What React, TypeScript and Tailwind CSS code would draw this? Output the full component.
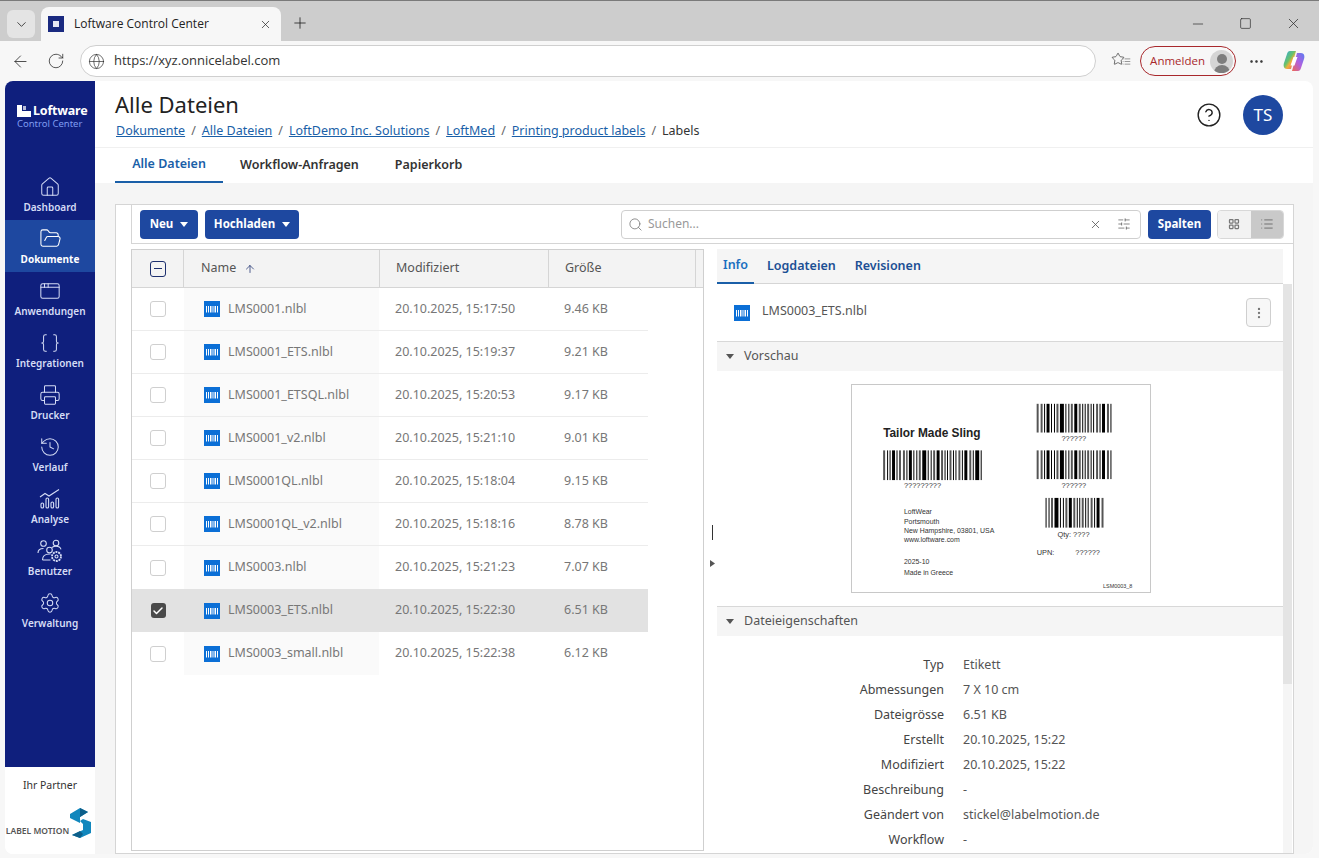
import React from 'react';
import {
  ArrowLeft, ChevronDown, Check, Globe, House, FolderOpen, AppWindow, Braces, Printer, History,
  Settings, MoreHorizontal, MoreVertical, Plus, RotateCw, Search, SlidersHorizontal, Square, Minus, X, ArrowUp,
  LayoutGrid, List, CircleHelp, Star,
} from 'lucide-react';

const files = [
  { name: 'LMS0001.nlbl', date: '20.10.2025, 15:17:50', size: '9.46 KB' },
  { name: 'LMS0001_ETS.nlbl', date: '20.10.2025, 15:19:37', size: '9.21 KB' },
  { name: 'LMS0001_ETSQL.nlbl', date: '20.10.2025, 15:20:53', size: '9.17 KB' },
  { name: 'LMS0001_v2.nlbl', date: '20.10.2025, 15:21:10', size: '9.01 KB' },
  { name: 'LMS0001QL.nlbl', date: '20.10.2025, 15:18:04', size: '9.15 KB' },
  { name: 'LMS0001QL_v2.nlbl', date: '20.10.2025, 15:18:16', size: '8.78 KB' },
  { name: 'LMS0003.nlbl', date: '20.10.2025, 15:21:23', size: '7.07 KB' },
  { name: 'LMS0003_ETS.nlbl', date: '20.10.2025, 15:22:30', size: '6.51 KB', selected: true },
  { name: 'LMS0003_small.nlbl', date: '20.10.2025, 15:22:38', size: '6.12 KB' },
];

const props = [
  ['Typ', 'Etikett'],
  ['Abmessungen', '7 X 10 cm'],
  ['Dateigrösse', '6.51 KB'],
  ['Erstellt', '20.10.2025, 15:22'],
  ['Modifiziert', '20.10.2025, 15:22'],
  ['Beschreibung', '-'],
  ['Geändert von', 'stickel@labelmotion.de'],
  ['Workflow', '-'],
];

const AnalyseIcon = () => (
  <svg width="22" height="22" viewBox="0 0 22 22" fill="none" stroke="currentColor" strokeWidth="1.1">
    <path d="M1 9l5-3.5 4 2.5L20 1.5" />
    <rect x="2" y="15" width="2.6" height="5" rx="1.3" />
    <rect x="7" y="10" width="2.6" height="10" rx="1.3" />
    <rect x="12" y="14" width="2.6" height="6" rx="1.3" />
    <rect x="17" y="10" width="2.6" height="10" rx="1.3" />
  </svg>
);

const UsersGearIcon = () => (
  <svg width="26" height="24" viewBox="0 0 26 24" fill="none" stroke="currentColor" strokeWidth="1.1">
    <circle cx="6.5" cy="4.5" r="2.8" />
    <circle cx="19" cy="4" r="2.8" />
    <circle cx="12.5" cy="11" r="2.8" />
    <path d="M1 14c0-3 2.5-4.5 5.500-4.500" />
    <path d="M15 8.500c1-.8 2.500-1.200 4-1.200 2.500 0 4.500 1.200 5 3" />
    <path d="M5.500 21c0-3.500 2.500-6 7-6h1M5.500 21h8" />
    <circle cx="19.500" cy="17.500" r="4.500" strokeDasharray="2 .8" strokeWidth="1.800" />
    <circle cx="19.500" cy="17.500" r="1.500" />
  </svg>
);

const navItems: { label: string; icon: React.ReactNode; active?: boolean }[] = [
  { label: 'Dashboard', icon: <House size={22} strokeWidth={1.1} /> },
  { label: 'Dokumente', icon: <FolderOpen size={23} strokeWidth={1.1} />, active: true },
  { label: 'Anwendungen', icon: <AppWindow size={22} strokeWidth={1.1} /> },
  { label: 'Integrationen', icon: <Braces size={22} strokeWidth={1.1} /> },
  { label: 'Drucker', icon: <Printer size={22} strokeWidth={1.1} /> },
  { label: 'Verlauf', icon: <History size={22} strokeWidth={1.1} /> },
  { label: 'Analyse', icon: <AnalyseIcon /> },
  { label: 'Benutzer', icon: <UsersGearIcon /> },
  { label: 'Verwaltung', icon: <Settings size={22} strokeWidth={1.1} /> },
];

const LabelFileIcon = ({ small }: { small?: boolean }) => (
  <svg width={small ? 16 : 16} height={small ? 16 : 16} viewBox="0 0 16 16" className="shrink-0">
    <rect width="16" height="16" fill="#0b6fd6" />
    <path d="M2.500 5v6.500M4.500 5v6.500M6.500 5v6.500M8 5v6.500M10 5v6.500M11.500 5v6.500M13.500 5v6.500" stroke="#fff" strokeWidth="1" />
  </svg>
);

const Caret = ({ color = '#fff' }: { color?: string }) => (
  <svg width="8" height="5" viewBox="0 0 8 5"><path d="M0 0h8L4 5z" fill={color} /></svg>
);

// barcode drawn from a repeating width pattern
const bars1 = [2, 1, 1, 3, 1, 2, 2, 1, 3, 1, 1, 2, 4, 1, 1, 2, 3, 2, 1, 1, 2, 1, 1, 2, 1, 3, 2, 1, 4, 1, 1, 2, 1, 1, 1, 2, 3, 1, 1, 1, 2, 1, 1, 2, 1, 3];

const Barcode = ({ x, y, w, h, seed = 0 }: { x: number; y: number; w: number; h: number; seed?: number }) => {
  const rects: React.ReactNode[] = [];
  let cx = 0;
  let i = seed;
  while (cx < w) {
    const bw = bars1[i % bars1.length];
    const gap = bars1[(i + 3) % bars1.length] > 2 ? 2 : 1.500;
    rects.push(<rect key={i} x={x + cx} y={y} width={Math.min(bw, w - cx)} height={h} fill={bw === 2 ? '#555' : '#000'} />);
    cx += bw + gap;
    i++;
  }
  return <g>{rects}</g>;
};

const LabelPreview = () => (
  <svg width="300" height="209" viewBox="0 0 300 209" className="border border-[#c8c8c8] bg-white" fontFamily="'Liberation Sans', sans-serif" fill="#333">
    <text x="31" y="52" fontSize="12" fontWeight="700" fill="#222">Tailor Made Sling</text>
    <Barcode x={31} y={66} w={101} h={30} />
    <text x="52" y="104" fontSize="7.500">?????????</text>
    <Barcode x={186} y={19} w={77} h={29} seed={5} />
    <text x="211" y="57" fontSize="7.500">??????</text>
    <Barcode x={186} y={66} w={77} h={29} seed={5} />
    <text x="211" y="104" fontSize="7.500">??????</text>
    <Barcode x={195} y={114} w={60} h={30} seed={9} />
    <text x="207" y="153" fontSize="7.500">Qty: ????</text>
    <text x="186" y="172" fontSize="7.500">UPN:</text>
    <text x="225" y="172" fontSize="7.500">??????</text>
    <text x="52" y="130" fontSize="7">LoftWear</text>
    <text x="52" y="140" fontSize="7">Portsmouth</text>
    <text x="52" y="149" fontSize="7">New Hampshire, 03801, USA</text>
    <text x="52" y="159" fontSize="7">www.loftware.com</text>
    <text x="52" y="181" fontSize="7">2025-10</text>
    <text x="52" y="192" fontSize="7">Made in Greece</text>
    <text x="253" y="205" fontSize="5.500">LSM0003_8</text>
  </svg>
);

const Section = ({ title, className = '' }: { title: string; className?: string }) => (
  <div className={`flex items-center h-[30px] bg-[#f5f5f5] border-t border-[#d8d8d8] pl-[9px] text-[12.500px] text-[#555] gap-[10px] ${className}`}>
    <Caret color="#555" />
    <span>{title}</span>
  </div>
);

const App: React.FC = () => {
  return (
    <div className="w-[1319px] h-[858px] overflow-hidden bg-[#f7f7f7] flex flex-col font-['Noto_Sans','Open_Sans',sans-serif] text-[#333] border-t border-[#7a7a7a]">
      {/* browser tab strip */}
      <div className="h-[40px] shrink-0 bg-[#cdcdcd] flex items-end pl-[7px] relative">
        <div className="w-[28px] h-[28px] mb-[3px] rounded-md bg-[#e4e4e4] flex items-center justify-center">
          <ChevronDown size={15} strokeWidth={1.300} className="text-[#222]" />
        </div>
        <div className="ml-[6px] w-[240px] h-[34px] bg-[#f7f7f7] rounded-t-lg flex items-center pl-[7px] pr-[9px] font-['Open_Sans',sans-serif]">
          <div className="w-[16px] h-[16px] bg-[#1a2a80] flex items-center justify-center mr-[10px]">
            <div className="w-[6px] h-[6px] bg-[#e8e8f5]" />
          </div>
          <span className="text-[12px] text-[#222] flex-1">Loftware Control Center</span>
          <X size={13} strokeWidth={1.300} className="text-[#222]" />
        </div>
        <Plus size={18} strokeWidth={1} className="ml-[10px] mb-[9px] text-[#111]" />
        <div className="ml-auto flex items-center gap-[33px] mb-[9px] mr-[17px] text-[#222]">
          <Minus size={16} strokeWidth={1} />
          <Square size={13} strokeWidth={1.200} />
          <X size={17} strokeWidth={1} />
        </div>
      </div>
      {/* browser toolbar */}
      <div className="h-[40px] shrink-0 flex items-center pl-[11px] pr-[13px]">
        <ArrowLeft size={19} strokeWidth={1} className="text-[#222]" />
        <RotateCw size={18} strokeWidth={1} className="ml-[17px] text-[#222]" />
        <div className="ml-[15px] w-[1017px] h-[32px] rounded-full border border-[#cfcfcf] bg-white flex items-center pl-[7px] font-['Open_Sans',sans-serif]">
          <Globe size={17} strokeWidth={1} className="text-[#333]" />
          <span className="ml-[9px] text-[13px] text-[#333]">https://xyz.onnicelabel.com</span>
        </div>
        <div className="ml-[15px] relative w-[18px] h-[18px]">
          <Star size={14} strokeWidth={1.100} className="text-[#222]" />
          <List size={9} strokeWidth={1.200} className="absolute right-[-2px] top-[5px] text-[#222]" />
        </div>
        <div className="ml-[11px] w-[96px] h-[30px] rounded-full border border-[#a8282c] flex items-center pl-[9px] pr-[2px] justify-between font-['Open_Sans',sans-serif]">
          <span className="text-[11.500px] text-[#a8282c]">Anmelden</span>
          <div className="w-[23px] h-[23px] rounded-full bg-[#d5d5d5] flex flex-col items-center justify-end overflow-hidden">
            <div className="w-[10px] h-[10px] rounded-full bg-[#7d7d7d] mb-[1px]" />
            <div className="w-[16px] h-[8px] rounded-t-full bg-[#7d7d7d]" />
          </div>
        </div>
        <MoreHorizontal size={17} strokeWidth={1.500} className="ml-[12px] text-[#222]" />
        <svg width="24" height="24" viewBox="0 0 24 24" className="ml-[17px]">
          <defs>
            <linearGradient id="cp" x1="0" y1="0" x2="1" y2="1">
              <stop offset="0" stopColor="#2aa9e8" /><stop offset=".45" stopColor="#6ac26a" /><stop offset=".6" stopColor="#f2b03a" /><stop offset="1" stopColor="#e0508a" />
            </linearGradient>
            <linearGradient id="cp2" x1="1" y1="0" x2="0" y2="1">
              <stop offset="0" stopColor="#5a7cf0" /><stop offset=".5" stopColor="#b060e0" /><stop offset="1" stopColor="#f06a50" />
            </linearGradient>
          </defs>
          <path d="M8 2h6l-5 18H5C2 20 1 17 2 14L5 5c.5-2 1.500-3 3-3z" fill="url(#cp)" />
          <path d="M16 22h-6l5-18h4c3 0 4 3 3 6l-3 9c-.5 2-1.500 3-3 3z" fill="url(#cp2)" />
          <path d="M11.500 8h4l-3 8.500h-4z" fill="#fff" />
        </svg>
      </div>

      {/* page */}
      <div className="flex-1 min-h-0 flex ml-[5px] mr-[6px] mb-[4px] rounded-[8px] overflow-hidden bg-white">
        {/* sidebar */}
        <div className="w-[90px] shrink-0 flex flex-col">
          <div className="h-[686px] bg-[#0f1f7d] flex flex-col">
            <div className="h-[87px] pt-[22px] pl-[12px]">
              <div className="flex items-center gap-[2px] text-white font-bold text-[12.500px] leading-[15px] tracking-[-0.2px]">
                <svg width="14" height="12" viewBox="0 0 14 12"><path d="M0 0h5v6h9v6H0z" fill="#fff" /><rect x="6" y="1" width="3" height="4" fill="#fff" opacity=".7" /></svg>
                <span>Loftware</span>
              </div>
              <div className="text-[#7f9cf0] text-[9.500px] leading-[12px]">Control Center</div>
            </div>
            {navItems.map(item => (
              <div
                key={item.label}
                className={`h-[52px] flex flex-col items-center justify-center text-[10px] leading-[14px] ${item.active ? 'bg-[#1e48a0] text-white font-bold' : 'text-[#d5dcf5] font-semibold'}`}
              >
                <div className="h-[24px] flex items-center justify-center">{item.icon}</div>
                <span className="mt-[1px]">{item.label}</span>
              </div>
            ))}
          </div>
          <div className="flex-1 flex flex-col items-center bg-white">
            <span className="mt-[11px] text-[10.500px] text-[#333]">Ihr Partner</span>
            <div className="mt-[14px] flex items-end gap-[1px] ml-[-2px]">
              <span className="text-[8.500px] leading-[12px] text-[#555] font-semibold mb-[1px]">LABEL MOTION</span>
              <svg width="22" height="30" viewBox="0 0 22 30">
                <path d="M0 6L10 0l8 4-8 5v6l-10-5z" fill="#1187bd" />
                <path d="M10 0l8 4-8 5z" fill="#0d5f8a" />
                <path d="M21 14v11l-11 5-8-3 11-5v-6l-3-3 3-2z" fill="#1187bd" />
                <path d="M2 27l8-4 3 3-3 4z" fill="#0d5f8a" />
              </svg>
            </div>
          </div>
        </div>

        {/* main */}
        <div className="flex-1 min-w-0 flex flex-col">
          <div className="h-[67px] shrink-0 flex items-start pl-[20px] pr-[30px] border-b border-[#f0f0f0]">
            <div className="flex-1">
              <h1 className="mt-[9px] text-[22px] leading-[28px] text-[#222]">Alle Dateien</h1>
              <div className="mt-[3px] flex items-center text-[12.500px] leading-[20px] pl-[1px]">
                {['Dokumente', 'Alle Dateien', 'LoftDemo Inc. Solutions', 'LoftMed', 'Printing product labels'].map(b => (
                  <React.Fragment key={b}>
                    <span className="text-[#1a5fa8] underline">{b}</span>
                    <span className="mx-[6px] text-[#666]">/</span>
                  </React.Fragment>
                ))}
                <span className="text-[#333]">Labels</span>
              </div>
            </div>
            <CircleHelp size={26} strokeWidth={1.300} className="mt-[21px] text-[#222]" />
            <div className="ml-[21px] mt-[14px] w-[40px] h-[40px] rounded-full bg-[#1e48a0] text-white text-[17px] flex items-center justify-center">TS</div>
          </div>
          <div className="h-[35px] shrink-0 flex items-stretch pl-[20px] text-[12.500px] font-medium">
            <div className="w-[108px] flex items-center justify-center text-[#1a5fa8] border-b-2 border-[#1a5fa8] font-semibold">Alle Dateien</div>
            <div className="ml-[17px] flex items-center text-[#333] font-semibold">Workflow-Anfragen</div>
            <div className="ml-[36px] flex items-center text-[#333] font-semibold">Papierkorb</div>
          </div>

          <div className="flex-1 min-h-0 bg-[#f5f5f5] pt-[21px] pl-[20px] pr-[19px]">
            <div className="h-full bg-white border border-[#d5d5d5] pl-[15px] flex flex-col">
              {/* action bar */}
              <div className="h-[39px] shrink-0 flex items-center border-l border-b border-[#d5d5d5] pl-[8px] pr-[9px]">
                <button className="w-[58px] h-[29px] rounded-[4px] bg-[#1e48a0] text-white text-[11.500px] font-bold flex items-center justify-center gap-[7px]">
                  Neu <Caret />
                </button>
                <button className="ml-[7px] w-[94px] h-[29px] rounded-[4px] bg-[#1e48a0] text-white text-[11.500px] font-bold flex items-center justify-center gap-[7px]">
                  Hochladen <Caret />
                </button>
                <div className="ml-auto w-[520px] h-[29px] rounded-[4px] border border-[#cfcfcf] flex items-center pl-[6px] pr-[9px]">
                  <Search size={15} strokeWidth={1.300} className="text-[#777]" />
                  <span className="ml-[5px] text-[12px] text-[#999] flex-1">Suchen...</span>
                  <X size={13} strokeWidth={1.500} className="text-[#555]" />
                  <SlidersHorizontal size={14} strokeWidth={1.200} className="ml-[15px] text-[#555]" />
                </div>
                <button className="ml-[7px] w-[63px] h-[29px] rounded-[4px] bg-[#1e48a0] text-white text-[11.500px] font-bold">Spalten</button>
                <div className="ml-[6px] w-[67px] h-[29px] rounded-[4px] border border-[#d8d8d8] flex overflow-hidden">
                  <div className="flex-1 bg-[#f2f2f2] flex items-center justify-center"><LayoutGrid size={12} strokeWidth={2.500} className="text-[#777]" /></div>
                  <div className="flex-1 bg-[#c9c9c9] flex items-center justify-center"><List size={14} strokeWidth={1.500} className="text-[#666]" /></div>
                </div>
              </div>

              <div className="flex-1 min-h-0 flex pt-[5px]">
                {/* table */}
                <div className="w-[573px] h-[602px] shrink-0 border border-[#cfcfcf] flex flex-col">
                  <div className="h-[38px] shrink-0 flex bg-[#f3f3f3] border-b border-[#d5d5d5] text-[12.500px] text-[#555]">
                    <div className="w-[52px] flex items-center justify-center border-r border-[#d5d5d5]">
                      <div className="w-[16px] h-[16px] rounded-[3px] border border-[#1c2f6e] flex items-center justify-center">
                        <div className="w-[8px] h-[1.500px] bg-[#1c2f6e]" />
                      </div>
                    </div>
                    <div className="w-[196px] flex items-center pl-[17px] border-r border-[#d5d5d5]">
                      Name
                      <ArrowUp size={12} strokeWidth={1.500} className="ml-[8px] text-[#1c2f6e]" />
                    </div>
                    <div className="w-[169px] flex items-center pl-[16px] border-r border-[#d5d5d5]">Modifiziert</div>
                    <div className="w-[147px] flex items-center pl-[16px] border-r border-[#d5d5d5]">Größe</div>
                  </div>
                  <div className="w-[516px]">
                    {files.map((f, i) => (
                      <div key={f.name} className={`h-[43px] flex items-center text-[12.500px] text-[#777] ${f.selected ? 'bg-[#e2e2e2] text-[#555]' : i < files.length - 1 && !files[i + 1].selected ? 'border-b border-[#ececec]' : ''}`}>
                        <div className="w-[52px] flex items-center justify-center">
                          {f.selected ? (
                            <div className="w-[15px] h-[15px] rounded-[3px] bg-[#4a4a4a] flex items-center justify-center">
                              <Check size={12} strokeWidth={3} className="text-white" />
                            </div>
                          ) : (
                            <div className="w-[16px] h-[16px] rounded-[3px] border border-[#cfcfcf] bg-white" />
                          )}
                        </div>
                        <div className={`w-[195px] h-full flex items-center pl-[20px] gap-[8px] ${f.selected ? '' : 'bg-[#fafafa]'}`}>
                          <LabelFileIcon />
                          <span>{f.name}</span>
                        </div>
                        <div className="w-[170px] pl-[16px] shrink-0">{f.date}</div>
                        <div className="pl-[15px]">{f.size}</div>
                      </div>
                    ))}
                  </div>
                </div>

                {/* splitter */}
                <div className="w-[13px] shrink-0 flex flex-col items-center">
                  <div className="mt-[276px] w-[1px] h-[15px] bg-[#333] ml-[3px]" />
                  <svg width="5" height="7" viewBox="0 0 5 7" className="mt-[20px] ml-[3px]"><path d="M0 0l5 3.500L0 7z" fill="#555" /></svg>
                </div>

                {/* detail pane */}
                <div className="flex-1 min-w-0 flex overflow-hidden">
                  <div className="w-[566px] shrink-0 flex flex-col">
                    <div className="h-[35px] shrink-0 bg-[#f5f5f5] border-b border-[#d5d5d5] flex items-stretch text-[12.500px] font-semibold text-[#1c4f94]">
                      <div className="w-[37px] flex items-center justify-center text-[#1a6fc0] border-b-2 border-[#1a5fa8] -mb-[1px]">Info</div>
                      <div className="ml-[13px] flex items-center">Logdateien</div>
                      <div className="ml-[19px] flex items-center">Revisionen</div>
                    </div>
                    <div className="h-[57px] shrink-0 flex items-center pl-[17px] pr-[12px]">
                      <LabelFileIcon small />
                      <span className="ml-[12px] mb-[3px] text-[12.500px] text-[#555]">LMS0003_ETS.nlbl</span>
                      <div className="ml-auto w-[25px] h-[29px] rounded-[4px] border border-[#cfcfcf] bg-[#f7f7f7] flex items-center justify-center">
                        <MoreVertical size={14} strokeWidth={2} className="text-[#777]" />
                      </div>
                    </div>
                    <Section title="Vorschau" />
                    <div className="h-[235px] shrink-0 flex justify-center pt-[13px] pl-[2px]">
                      <LabelPreview />
                    </div>
                    <Section title="Dateieigenschaften" />
                    <div className="pt-[17px] text-[12.500px]">
                      {props.map(([k, v]) => (
                        <div key={k} className="h-[25px] flex items-center">
                          <span className="w-[227px] text-right text-[#444]">{k}</span>
                          <span className="ml-[19px] text-[#555]">{v}</span>
                        </div>
                      ))}
                    </div>
                  </div>
                  {/* scrollbar */}
                  <div className="w-[9px] shrink-0 mt-[35px] bg-[#f5f5f5]">
                    <div className="h-[400px] bg-[#e4e4e4]" />
                  </div>
                </div>
              </div>
            </div>
          </div>
        </div>
      </div>
    </div>
  );
};

export default App;
